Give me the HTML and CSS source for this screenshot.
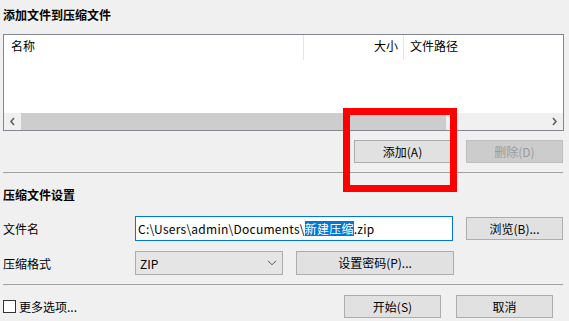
FILE: index.html
```html
<!DOCTYPE html>
<html lang="zh-CN">
<head>
<meta charset="utf-8">
<title>添加文件到压缩文件</title>
<link rel="stylesheet" href="styles.css">
</head>
<body>
<div class="dialog">
  <div class="group-title">添加文件到压缩文件</div>

  <div class="listbox">
    <div class="list-header">
      <div class="col col-name">名称</div>
      <div class="col col-size">大小</div>
      <div class="col col-path">文件路径</div>
    </div>
    <div class="list-body"></div>
    <div class="hscroll">
      <div class="scroll-btn">
        <svg width="7" height="9" viewBox="0 0 7 9"><path d="M5 1 L2 4.5 L5 8" fill="none" stroke="#606060" stroke-width="1.6"/></svg>
      </div>
      <div class="scroll-track">
        <div class="scroll-thumb"></div>
      </div>
      <div class="scroll-btn">
        <svg width="7" height="9" viewBox="0 0 7 9"><path d="M2 1 L5 4.5 L2 8" fill="none" stroke="#606060" stroke-width="1.6"/></svg>
      </div>
    </div>
  </div>

  <div class="button-row top-buttons">
    <button class="btn">添加(A)</button>
    <button class="btn" disabled>删除(D)</button>
  </div>

  <div class="separator"></div>

  <div class="section-title">压缩文件设置</div>

  <div class="form-row row-name">
    <label class="form-label">文件名</label>
    <div class="textbox"><span>C:\Users\admin\Documents\</span><span class="sel">新建压缩</span><span>.zip</span></div>
    <button class="btn">浏览(B)...</button>
  </div>

  <div class="form-row row-format">
    <label class="form-label">压缩格式</label>
    <div class="combo">
      <span>ZIP</span>
      <svg width="10" height="6" viewBox="0 0 10 6"><path d="M1 0.8 L5 4.8 L9 0.8" fill="none" stroke="#555" stroke-width="1"/></svg>
    </div>
    <button class="btn btn-wide">设置密码(P)...</button>
  </div>

  <div class="separator sep-bottom"></div>

  <div class="footer">
    <label class="check"><span class="check-box"></span>更多选项...</label>
    <div class="footer-buttons">
      <button class="btn">开始(S)</button>
      <button class="btn">取消</button>
    </div>
  </div>

  <div class="highlight-box"></div>
</div>
</body>
</html>
```

FILE: styles.css
```css
html, body {
  margin: 0;
  padding: 0;
  background: #f0f0f0;
}

body {
  width: 569px;
  height: 321px;
  overflow: hidden;
  font-family: "Noto Sans CJK SC", "Noto Sans", sans-serif;
  font-size: 12px;
  color: #000;
}

.dialog {
  position: relative;
  width: 569px;
  height: 321px;
}

.group-title {
  height: 34px;
  line-height: 30px;
  padding-left: 3px;
  font-weight: 700;
}

.listbox {
  margin-left: 3px;
  width: 561px;
  height: 97px;
  box-sizing: border-box;
  border: 1px solid #828790;
  background: #fff;
  display: flex;
  flex-direction: column;
}

.list-header {
  display: flex;
  height: 25px;
  line-height: 22px;
}

.col {
  box-sizing: border-box;
  height: 25px;
}

.col-name {
  width: 300px;
  padding-left: 7px;
  border-right: 1px solid #e5e5e5;
}

.col-size {
  width: 100px;
  padding-right: 5px;
  text-align: right;
  border-right: 1px solid #e5e5e5;
}

.col-path {
  padding-left: 6px;
}

.list-body {
  flex: 1;
}

.hscroll {
  height: 17px;
  display: flex;
  background: #f0f0f0;
}

.scroll-btn {
  width: 17px;
  height: 17px;
  display: flex;
  align-items: center;
  justify-content: center;
}

.scroll-track {
  flex: 1;
  display: flex;
}

.scroll-thumb {
  width: 425px;
  height: 17px;
  background: #cdcdcd;
}

.button-row {
  display: flex;
  justify-content: flex-end;
  gap: 15px;
}

.top-buttons {
  margin-top: 9px;
  padding-right: 6px;
}

.btn {
  width: 97px;
  height: 23px;
  box-sizing: border-box;
  border: 1px solid #adadad;
  background: #e1e1e1;
  font-family: inherit;
  font-size: 12px;
  color: #000;
  padding: 0;
  line-height: 20px;
}

.btn:disabled {
  background: #cccccc;
  border-color: #bfbfbf;
  color: #9a9a9a;
}

.separator {
  height: 1px;
  background: #a0a0a0;
  margin: 9px 6px 0 3px;
}

.section-title {
  margin-top: 14px;
  line-height: 16px;
  padding-left: 3px;
  font-weight: 700;
}

.form-row {
  display: flex;
  align-items: center;
}

.row-name {
  margin-top: 13px;
  height: 25px;
}

.row-format {
  margin-top: 10px;
  height: 24px;
}

.form-label {
  width: 135px;
  padding-left: 3px;
  box-sizing: border-box;
  flex-shrink: 0;
}

.textbox {
  width: 318px;
  height: 25px;
  box-sizing: border-box;
  border: 1px solid #0078d7;
  background: #fff;
  padding-left: 2px;
  line-height: 15px;
  display: flex;
  align-items: center;
  white-space: nowrap;
  overflow: hidden;
  margin-right: 13px;
  letter-spacing: 0.25px;
}

.sel {
  background: #0078d7;
  color: #fff;
}

.combo {
  width: 148px;
  height: 24px;
  box-sizing: border-box;
  border: 1px solid #adadad;
  background: #e5e5e5;
  display: flex;
  align-items: center;
  justify-content: space-between;
  padding: 0 5px 0 4px;
  margin-right: 13px;
}

.btn-wide {
  width: 158px;
  height: 24px;
}

.sep-bottom {
  margin-top: 9px;
}

.footer {
  margin-top: 10px;
  display: flex;
  align-items: center;
  justify-content: space-between;
  padding-left: 3px;
  padding-right: 16px;
}

.check {
  display: flex;
  align-items: center;
  gap: 3px;
}

.check-box {
  width: 13px;
  height: 13px;
  box-sizing: border-box;
  border: 1px solid #333;
  background: #fff;
}

.footer-buttons {
  display: flex;
  gap: 15px;
}

.highlight-box {
  position: absolute;
  left: 343px;
  top: 108px;
  width: 114px;
  height: 84px;
  box-sizing: border-box;
  border: 7px solid #ff0000;
}
```
